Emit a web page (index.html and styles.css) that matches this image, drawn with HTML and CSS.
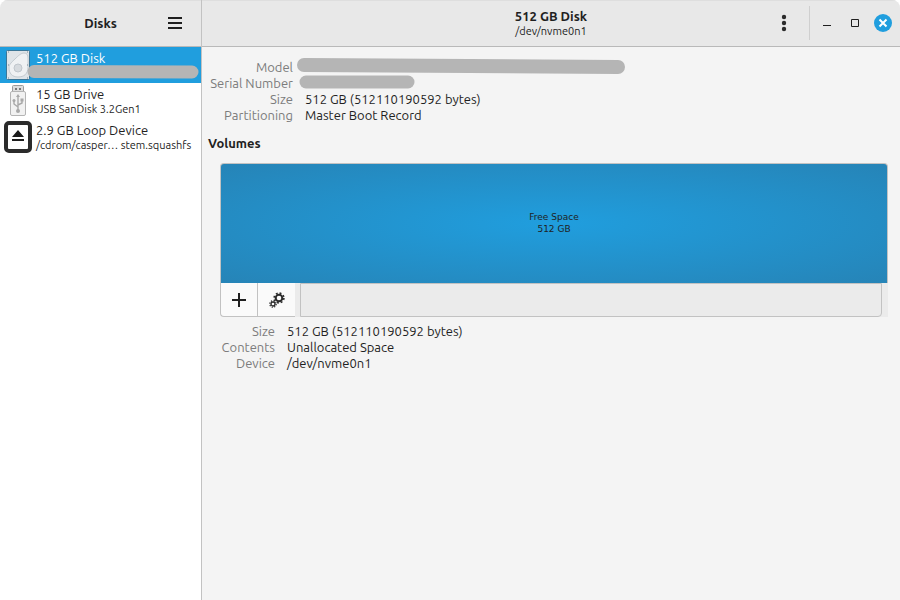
FILE: index.html
```html
<!DOCTYPE html>
<html lang="en">
<head>
  <meta charset="UTF-8">
  <meta name="viewport" content="width=device-width, initial-scale=1.0">
  <link rel="stylesheet" href="styles.css">
  <title>Disks</title>
</head>
<body>

<div class="window">

  <aside class="sidebar">
    <header class="titlebar sidebar-title">
      <h2>Disks</h2>
      <button class="icon-btn" aria-label="Menu">
        <svg width="14" height="12" viewBox="0 0 14 12"><path d="M0 1h14M0 6h14M0 11h14" stroke="#1f1f1f" stroke-width="2"/></svg>
      </button>
    </header>

    <div class="devices">
      <button class="device selected">
        <svg class="device-icon" width="28" height="32" viewBox="0 0 28 32">
          <rect x="2.5" y="1.500" width="23" height="29" rx="1" fill="#dfe4e8" stroke="#3b7798"/>
          <path d="M20 4c3 0 4 2 4 5v9c0 7-4 10-10 10s-9-4-9-9c0-4 3-6 6-9s6-6 9-6z" fill="#eff1f3" stroke="#c3cad0"/>
          <circle cx="14" cy="19" r="4" fill="#d6dade" stroke="#c0c6cc"/>
          <path d="M4 3h1M23 3h1M4 29h1M23 29h1M4 16h1M23 16h1" stroke="#788894"/>
        </svg>
        <span class="device-text">
          <span class="name">512 GB Disk</span>
          <svg class="device-mask" width="172" height="14" viewBox="0 0 172 14"><path d="M7 6.500L165 7" stroke="#b5b5b5" stroke-width="13" stroke-linecap="round"/></svg>
        </span>
      </button>

      <button class="device">
        <svg class="device-icon" width="28" height="32" viewBox="0 0 28 32">
          <path d="M8.500 7V1.500q0-1 1-1h9q1 0 1 1V7" fill="#dedede" stroke="#9c9c9c"/>
          <path d="M11 3h2v2h-2zM15 3h2v2h-2z" fill="#777"/>
          <rect x="6.500" y="6.500" width="15" height="24" rx="1.500" fill="#f1f1f1" stroke="#b4b4b4"/>
          <path d="M14 25V11M14 22l-4-3v-3M14 20l4-2v-3" fill="none" stroke="#a8a8a8" stroke-width="1.400"/>
          <path d="M14 9l2 3h-4z" fill="#a8a8a8"/>
          <circle cx="14" cy="26" r="2" fill="#a8a8a8"/>
          <circle cx="10" cy="15.500" r="1.500" fill="#a8a8a8"/>
          <path d="M16.500 13.500h3v3h-3z" fill="#a8a8a8"/>
        </svg>
        <span class="device-text">
          <span class="name">15 GB Drive</span>
          <span class="info">USB SanDisk 3.2Gen1</span>
        </span>
      </button>

      <button class="device">
        <svg class="device-icon" width="28" height="32" viewBox="0 0 28 32">
          <rect x="2" y="2" width="24" height="28" rx="3" fill="#fff" stroke="#2b2b2b" stroke-width="4"/>
          <path d="M14 9l6 7H8zM8 18h12v2H8z" fill="#1c1c1c"/>
        </svg>
        <span class="device-text">
          <span class="name">2.9 GB Loop Device</span>
          <span class="info">/cdrom/casper… stem.squashfs</span>
        </span>
      </button>
    </div>
  </aside>

  <main class="content">
    <header class="titlebar content-title">
      <div class="heading">
        <h1>512 GB Disk</h1>
        <p>/dev/nvme0n1</p>
      </div>
      <div class="controls">
        <button class="icon-btn" aria-label="Drive options">
          <svg width="6" height="18" viewBox="0 0 6 18"><g fill="#2b2b2b"><circle cx="3" cy="3" r="2.200"/><circle cx="3" cy="9" r="2.200"/><circle cx="3" cy="15" r="2.200"/></g></svg>
        </button>
        <span class="separator"></span>
        <button class="icon-btn win-btn" aria-label="Minimize">
          <svg width="18" height="18" viewBox="0 0 18 18"><path d="M5 11.500h8" stroke="#1f1f1f"/></svg>
        </button>
        <button class="icon-btn win-btn" aria-label="Maximize">
          <svg width="18" height="18" viewBox="0 0 18 18"><path d="M5.500 5.500h7v7h-7z" fill="none" stroke="#1f1f1f"/></svg>
        </button>
        <button class="icon-btn win-btn" aria-label="Close">
          <svg width="18" height="18" viewBox="0 0 18 18"><circle cx="9" cy="9" r="9" fill="#209ede"/><path d="M5.500 5.500l7 7M12.500 5.500l-7 7" stroke="#fff" stroke-width="2"/></svg>
        </button>
      </div>
    </header>

    <section class="drive">
      <dl class="details drive-details">
        <dt>Model</dt>
        <dd class="masked"><svg width="328" height="16" viewBox="0 0 328 16"><path d="M7 7L321 9" stroke="#b5b5b5" stroke-width="14" stroke-linecap="round"/></svg></dd>
        <dt>Serial Number</dt>
        <dd class="masked"><svg width="328" height="16" viewBox="0 0 328 16"><path d="M9 8H111" stroke="#b5b5b5" stroke-width="13" stroke-linecap="round"/></svg></dd>
        <dt>Size</dt>
        <dd>512 GB (512110190592 bytes)</dd>
        <dt>Partitioning</dt>
        <dd>Master Boot Record</dd>
      </dl>

      <h3>Volumes</h3>

      <div class="volumes">
        <button class="volume">Free Space<br>512 GB</button>
        <div class="toolbar">
          <div class="tools">
            <button class="tool" aria-label="Create partition">
              <svg width="14" height="14" viewBox="0 0 14 14"><path d="M7 0v14M0 7h14" stroke="#1f1f1f" stroke-width="2"/></svg>
            </button>
            <button class="tool" aria-label="Additional partition options">
              <svg width="16" height="16" viewBox="0 0 16 16" fill="none" stroke="#2b2b2b">
                <circle cx="10" cy="6" r="3.300" stroke-width="2"/>
                <circle cx="10" cy="6" r="4.900" stroke-width="1.600" stroke-dasharray="1.900 1.950"/>
                <circle cx="4" cy="12" r="2" stroke-width="1.300"/>
                <circle cx="4" cy="12" r="3.200" stroke-width="1.200" stroke-dasharray="1.250 1.260"/>
              </svg>
            </button>
          </div>
          <div class="toolbar-fill"></div>
        </div>
      </div>

      <dl class="details volume-details">
        <dt>Size</dt>
        <dd>512 GB (512110190592 bytes)</dd>
        <dt>Contents</dt>
        <dd>Unallocated Space</dd>
        <dt>Device</dt>
        <dd>/dev/nvme0n1</dd>
      </dl>
    </section>
  </main>

</div>

</body>
</html>
```

FILE: styles.css
```css
* {
  box-sizing: border-box;
}

body {
  margin: 0;
  font-family: Ubuntu, 'Noto Sans', sans-serif;
  font-size: 13px;
  line-height: 16px;
  color: #1f1f1f;
  background-color: #fff;
}

h1, h2, h3, p, dl, dd {
  margin: 0;
}

h1, h2, h3 {
  font-size: 13px;
  font-weight: bold;
}

button {
  font-family: inherit;
  font-size: inherit;
  line-height: inherit;
  color: inherit;
  border: none;
  padding: 0;
  background: none;
  cursor: pointer;
}

svg {
  display: block;
}

.window {
  display: flex;
  min-height: 100vh;
  border-radius: 8px 8px 0 0;
  overflow: hidden;
  background-color: #f4f4f4;
}

.titlebar {
  display: grid;
  align-items: center;
  height: 47px;
  background-color: #e8e8e8;
  box-shadow: inset 0 1px #dedede;
  border-bottom: 1px solid #b9b9b9;
}

.icon-btn {
  display: flex;
  align-items: center;
  justify-content: center;
  width: 34px;
  height: 34px;
}

/* sidebar */

.sidebar {
  flex: 0 0 202px;
  border-right: 1px solid #c2c2c2;
  background-color: #fff;
}

.sidebar-title {
  grid-template-columns: 1fr auto 1fr;
}

.sidebar-title h2 {
  grid-column: 2;
}

.sidebar-title .icon-btn {
  justify-self: end;
  margin-right: 9px;
}

.device {
  display: flex;
  gap: 4px;
  width: 100%;
  height: 36px;
  padding: 2px 4px;
  text-align: left;
}

.device.selected {
  background-color: #209ede;
  color: #fff;
}

.device-icon {
  flex: none;
}

.device-text {
  position: relative;
  flex: 1;
  white-space: nowrap;
}

.device-text .name {
  display: block;
  line-height: 18px;
}

.device-text .info {
  display: block;
  font-size: 11px;
  line-height: 12px;
}

.device-mask {
  position: absolute;
  right: -2px;
  bottom: 2px;
}

/* header of the selected drive */

.content {
  flex: 1;
  min-width: 0;
}

.content-title {
  grid-template-columns: 1fr auto 1fr;
}

.heading {
  grid-column: 2;
  text-align: center;
}

.heading p {
  font-size: 11px;
  line-height: 14px;
}

.controls {
  display: flex;
  align-items: center;
  justify-self: end;
  padding-right: 3px;
}

.separator {
  width: 1px;
  height: 34px;
  margin: 0 3px 0 8px;
  background-color: #cfcfcf;
}

.win-btn {
  width: 28px;
}

/* drive page */

.drive {
  padding: 12px 12px 12px 6px;
}

.details {
  display: grid;
  grid-template-columns: auto 1fr;
  column-gap: 12px;
}

.drive-details {
  grid-template-columns: 85px 1fr;
}

.details dt {
  text-align: right;
  color: #7c7c7c;
}

.details .masked {
  margin-left: -8px;
  margin-top: -1px;
}

.drive h3 {
  margin: 12px 0;
}

.volumes {
  margin-left: 12px;
  border-radius: 4px 4px 0 4px;
  background-color: #ebebeb;
}

.volume {
  display: block;
  width: 100%;
  height: 120px;
  padding-bottom: 2px;
  border: 1px solid #c2c2c2;
  border-bottom: none;
  border-radius: 4px 4px 0 0;
  background: radial-gradient(ellipse farthest-corner, #209ede, #2684b7);
  font-family: 'DejaVu Sans', sans-serif;
  font-size: 9px;
  line-height: 12px;
}

.toolbar {
  display: flex;
  gap: 5px;
  height: 34px;
  padding-right: 6px;
}

.tools {
  display: flex;
  border: 1px solid #c2c2c2;
  border-top: none;
  border-right: none;
  border-radius: 0 0 0 4px;
  background-color: #fafafa;
}

.tool {
  display: flex;
  align-items: center;
  justify-content: center;
  width: 36px;
}

.tool + .tool {
  width: 38px;
  border-left: 1px solid #c2c2c2;
}

.toolbar-fill {
  flex: 1;
  border: 1px solid #c2c2c2;
  border-radius: 0 0 4px 0;
}

.volume-details {
  grid-template-columns: 55px 1fr;
  margin: 6px 12px;
}
```
